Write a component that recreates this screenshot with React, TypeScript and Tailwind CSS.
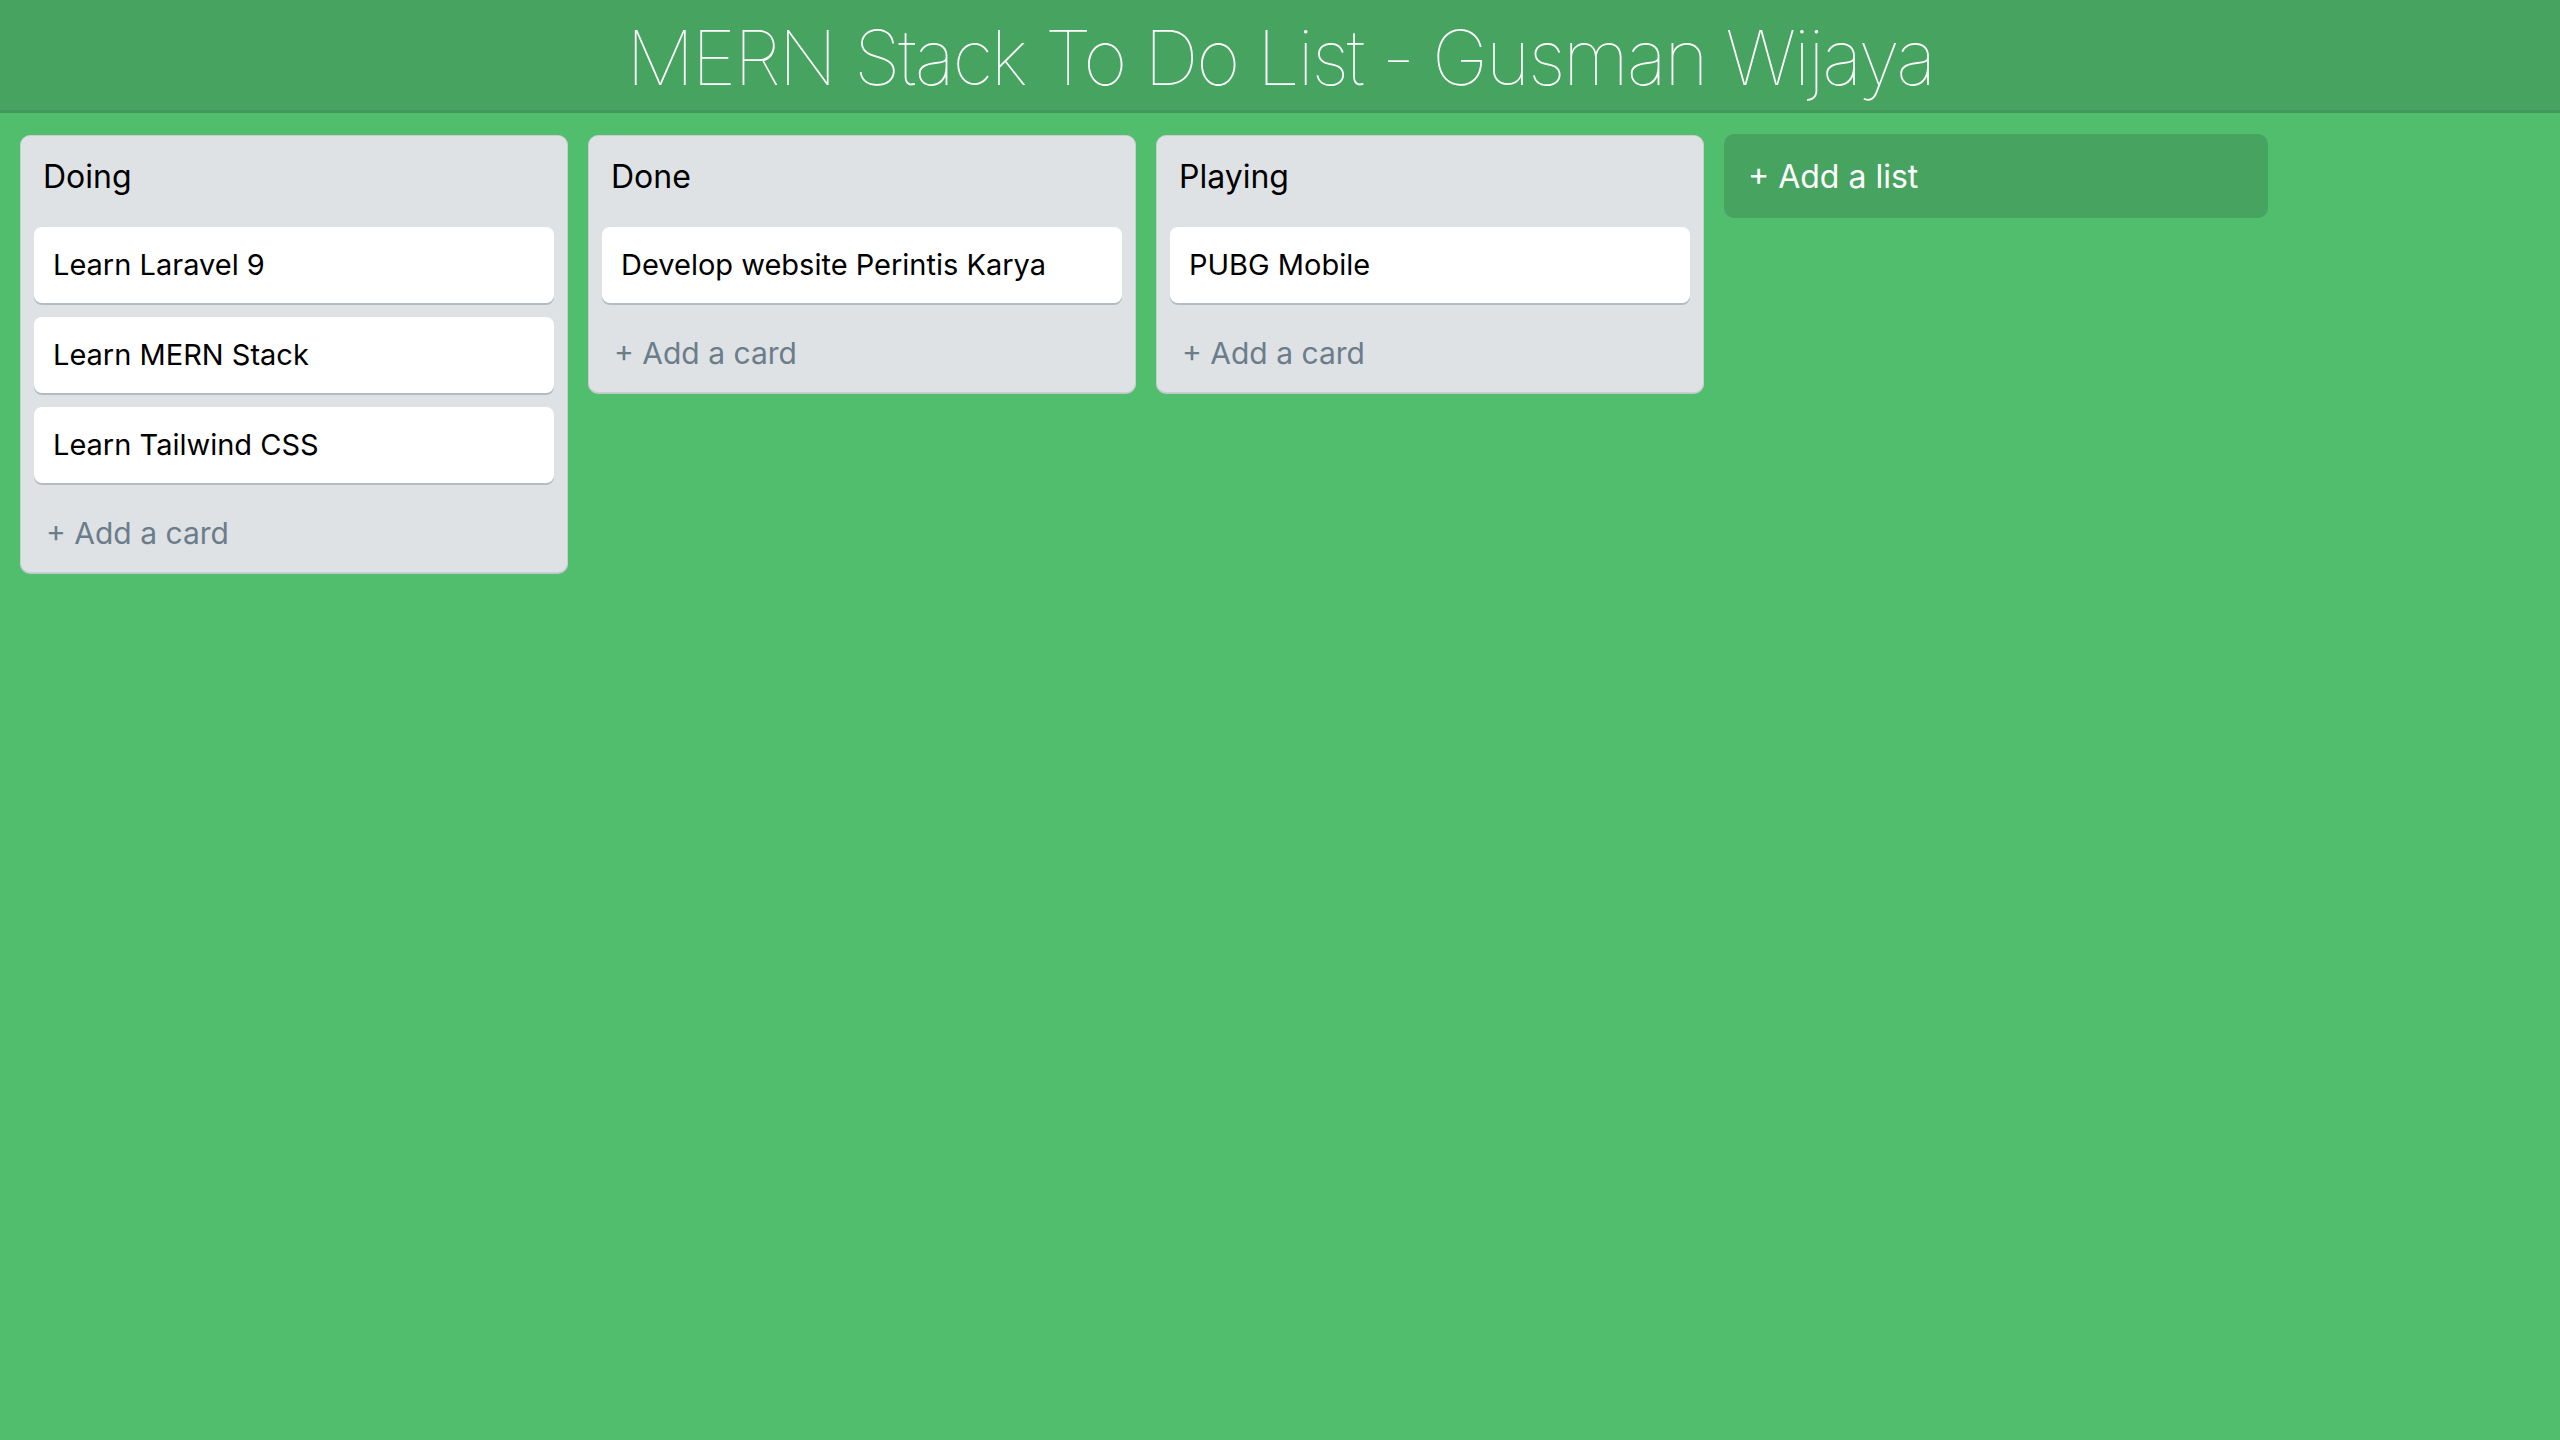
import React from 'react';

type Board = { title: string; cards: string[] };

const boards: Board[] = [
    { title: 'Doing', cards: ['Learn Laravel 9', 'Learn MERN Stack', 'Learn Tailwind CSS'] },
    { title: 'Done', cards: ['Develop website Perintis Karya'] },
    { title: 'Playing', cards: ['PUBG Mobile'] },
];

function List({ board }: { board: Board }) {
    return (
        <div className="w-[548px] shrink-0 bg-[#dfe2e5] rounded-[10px] border border-[#c9ced2] shadow-[0_1px_0_#c0c6ca] px-[13px] pt-[22px] pb-[21px]">
            <h2 className="pl-[9px] text-[32px] leading-[38px] text-black">{board.title}</h2>

            <div className="mt-[31px] flex flex-col gap-[14px]">
                {board.cards.map((card) => (
                    <div
                        key={card}
                        className="bg-white rounded-[8px] shadow-[0_2px_0_#b3bcc2] px-[19px] py-[21px] text-[29px] leading-[34px] text-black"
                    >
                        {card}
                    </div>
                ))}
            </div>

            <button className="mt-[32px] pl-[12px] text-[30px] leading-[36px] text-[#6b7d8a]">
                + Add a card
            </button>
        </div>
    );
}

export default function App() {
    return (
        <div className="w-full min-h-screen bg-[#51be6e] font-['Inter','Noto_Sans',sans-serif]">
            <header className="h-[113px] bg-[#47a360] border-b-[3px] border-[#3f9857] pt-[19px] text-center">
                <h1 className="text-[76px] leading-none font-thin text-white tracking-[-0.03em]">
                    MERN Stack To Do List - Gusman Wijaya
                </h1>
            </header>

            <main className="flex items-start gap-[20px] pl-[20px] pt-[22px]">
                {boards.map((b) => (
                    <List key={b.title} board={b} />
                ))}

                <button className="w-[544px] shrink-0 -mt-[1px] bg-[#47a360] rounded-[10px] px-[24px] pt-[24px] pb-[22px] text-left text-[32px] leading-[38px] text-white">
                    + Add a list
                </button>
            </main>
        </div>
    );
}
